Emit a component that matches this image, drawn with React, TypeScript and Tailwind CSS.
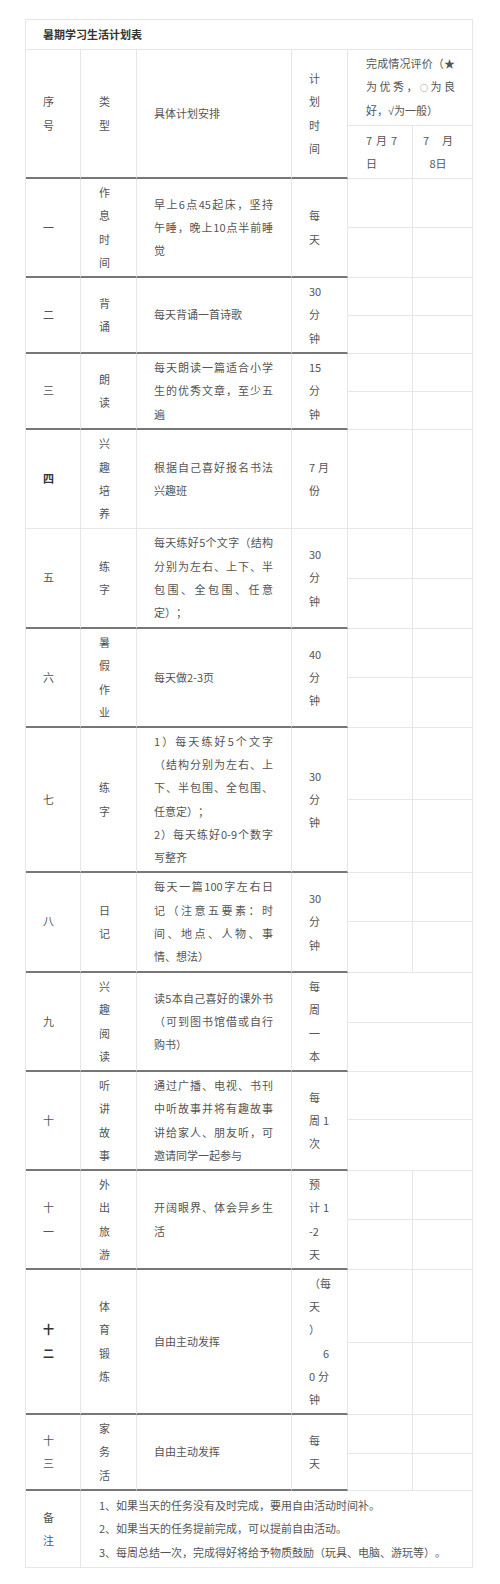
import type { ReactNode } from "react";

type Line = string | { t: ReactNode; j?: boolean; c?: boolean; pl?: boolean };

type Item = {
  no: string[];
  bold?: boolean;
  kind: string[];
  plan: Line[];
  time: Line[];
  right?: "split" | "tall" | "wide";
  thin?: boolean;
};

const J = (t: ReactNode) => ({ t, j: true });

const items: Item[] = [
  {
    no: ["一"],
    kind: ["作", "息", "时", "间"],
    plan: [J("早上6点45起床，坚持"), J("午睡，晚上10点半前睡"), "觉"],
    time: ["每", "天"],
  },
  { no: ["二"], kind: ["背", "诵"], plan: ["每天背诵一首诗歌"], time: ["30", "分", "钟"] },
  {
    no: ["三"],
    kind: ["朗", "读"],
    plan: [J("每天朗读一篇适合小学"), J("生的优秀文章，至少五"), "遍"],
    time: ["15", "分", "钟"],
  },
  {
    no: ["四"],
    bold: true,
    kind: ["兴", "趣", "培", "养"],
    plan: [J("根据自己喜好报名书法"), "兴趣班"],
    time: [J("7月"), "份"],
    right: "tall",
    thin: true,
  },
  {
    no: ["五"],
    kind: ["练", "字"],
    plan: [J("每天练好5个文字（结构"), J("分别为左右、上下、半"), J("包围、全包围、任意"), "定）；"],
    time: ["30", "分", "钟"],
  },
  { no: ["六"], kind: ["暑", "假", "作", "业"], plan: ["每天做2-3页"], time: ["40", "分", "钟"] },
  {
    no: ["七"],
    kind: ["练", "字"],
    plan: [
      J("1）每天练好5个文字"),
      J("（结构分别为左右、上"),
      J("下、半包围、全包围、"),
      "任意定）；",
      J("2）每天练好0-9个数字"),
      "写整齐",
    ],
    time: ["30", "分", "钟"],
  },
  {
    no: ["八"],
    kind: ["日", "记"],
    plan: [J("每天一篇100字左右日"), J("记（注意五要素：时"), J("间、地点、人物、事"), "情、想法）"],
    time: ["30", "分", "钟"],
  },
  {
    no: ["九"],
    kind: ["兴", "趣", "阅", "读"],
    plan: [J("读5本自己喜好的课外书"), J("（可到图书馆借或自行"), "购书）"],
    time: ["每", "周", "一", "本"],
    right: "wide",
  },
  {
    no: ["十"],
    kind: ["听", "讲", "故", "事"],
    plan: [J("通过广播、电视、书刊"), J("中听故事并将有趣故事"), J("讲给家人、朋友听，可"), "邀请同学一起参与"],
    time: ["每", J("周1"), "次"],
    right: "wide",
  },
  {
    no: ["十", "一"],
    kind: ["外", "出", "旅", "游"],
    plan: [J("开阔眼界、体会异乡生"), "活"],
    time: ["预", J("计1"), "-2", "天"],
  },
  {
    no: ["十", "二"],
    bold: true,
    kind: ["体", "育", "锻", "炼"],
    plan: ["自由主动发挥"],
    time: ["（每", "天", "）", { t: "6", pl: true }, J("0分"), "钟"],
  },
  { no: ["十", "三"], kind: ["家", "务", "活"], plan: ["自由主动发挥"], time: ["每", "天"] },
];

const notes = [
  "1、如果当天的任务没有及时完成，要用自由活动时间补。",
  "2、如果当天的任务提前完成，可以提前自由活动。",
  "3、每周总结一次，完成得好将给予物质鼓励（玩具、电脑、游玩等）。",
];

const thick = "border-b-2 border-b-[#777]";
const thin = "border-b border-b-[#e6e6e6]";
const cell = "flex flex-col justify-center border-r border-r-[#e6e6e6]";

function Lines({ lines }: { lines: Line[] }) {
  return (
    <>
      {lines.map((l, i) => {
        const o = typeof l === "string" ? { t: l } : l;
        return (
          <div
            key={i}
            className={`leading-[23.3px] ${o.j ? "text-justify [text-align-last:justify]" : "whitespace-nowrap"} ${
              o.c ? "text-center" : ""
            } ${o.pl ? "pl-[14px]" : ""}`}
          >
            {o.t}
          </div>
        );
      })}
    </>
  );
}

function Right({ kind }: { kind: Item["right"] }) {
  const box = `border-r border-r-[#e6e6e6] ${thin}`;
  if (kind === "tall") {
    return (
      <>
        <div className={`row-span-2 ${box}`} />
        <div className={`row-span-2 ${box}`} />
      </>
    );
  }
  if (kind === "wide") {
    return (
      <>
        <div className={`col-span-2 ${box}`} />
        <div className={`col-span-2 ${box}`} />
      </>
    );
  }
  return (
    <>
      <div className={box} />
      <div className={box} />
      <div className={box} />
      <div className={box} />
    </>
  );
}

export default function App() {
  return (
    <div className="min-h-[1584px] bg-white pt-[19px] font-['Noto_Sans_CJK_SC',sans-serif] text-[11px] text-[#555] [text-spacing-trim:space-all]">
      <div className="ml-[25px] grid w-[448px] grid-cols-[55px_56px_155px_56px_65px_60px] grid-rows-[30px_76px_53px_49px_50px_38px_38px_38px_38px_49px_50px_50px_50px_49px_50px_72px_73px_49px_51px_50px_49px_48px_51px_49px_50px_73px_72px_39px_37px_77px] border-l border-t border-[#e6e6e6]">
        {/* title */}
        <div className={`col-span-6 pl-[17px] font-bold text-[#333] ${cell} ${thin}`}>
          暑期学习生活计划表
        </div>

        {/* header */}
        <div className={`row-span-2 pl-[17px] ${cell} ${thick}`}>
          <Lines lines={["序", "号"]} />
        </div>
        <div className={`row-span-2 pl-[18px] ${cell} ${thick}`}>
          <Lines lines={["类", "型"]} />
        </div>
        <div className={`row-span-2 pl-[17px] ${cell} ${thick}`}>
          <Lines lines={["具体计划安排"]} />
        </div>
        <div className={`row-span-2 pl-[17px] ${cell} ${thick}`}>
          <Lines lines={["计", "划", "时", "间"]} />
        </div>
        <div className={`col-span-2 pl-[18px] pr-[17px] ${cell} ${thin}`}>
          <Lines
            lines={[
              J("完成情况评价（★"),
              J(
                <>
                  为优秀，<span className="text-[8px]">○</span>为良
                </>
              ),
              {
                t: (
                  <>
                    好，<span className="font-['Liberation_Sans',sans-serif]">√</span>为一般）
                  </>
                ),
              },
            ]}
          />
        </div>
        <div className={`pl-[18px] pr-[15px] ${cell} ${thin}`}>
          <Lines lines={[J("7月7"), "日"]} />
        </div>
        <div className={`pl-[10px] pr-[19px] ${cell} ${thin}`}>
          <Lines lines={[J("7月"), { t: "8日", c: true }]} />
        </div>

        {items.map((it, idx) => {
          const b = it.thin ? thin : thick;
          return [
            <div key={`${idx}-a`} className={`row-span-2 pl-[17px] ${cell} ${b} ${it.bold ? "font-bold text-[#333]" : ""}`}>
              <Lines lines={it.no} />
            </div>,
            <div key={`${idx}-b`} className={`row-span-2 pl-[18px] ${cell} ${b}`}>
              <Lines lines={it.kind} />
            </div>,
            <div key={`${idx}-c`} className={`row-span-2 pl-[17px] pr-[18px] ${cell} ${b}`}>
              <Lines lines={it.plan} />
            </div>,
            <div key={`${idx}-d`} className={`row-span-2 pl-[17px] pr-[18px] ${cell} ${b}`}>
              <Lines lines={it.time} />
            </div>,
            <Right key={`${idx}-r`} kind={it.right} />,
          ];
        })}

        {/* notes */}
        <div className={`pl-[17px] ${cell} ${thin}`}>
          <Lines lines={["备", "注"]} />
        </div>
        <div className={`col-span-5 pl-[18px] ${cell} ${thin}`}>
          <Lines lines={notes} />
        </div>
      </div>
    </div>
  );
}
